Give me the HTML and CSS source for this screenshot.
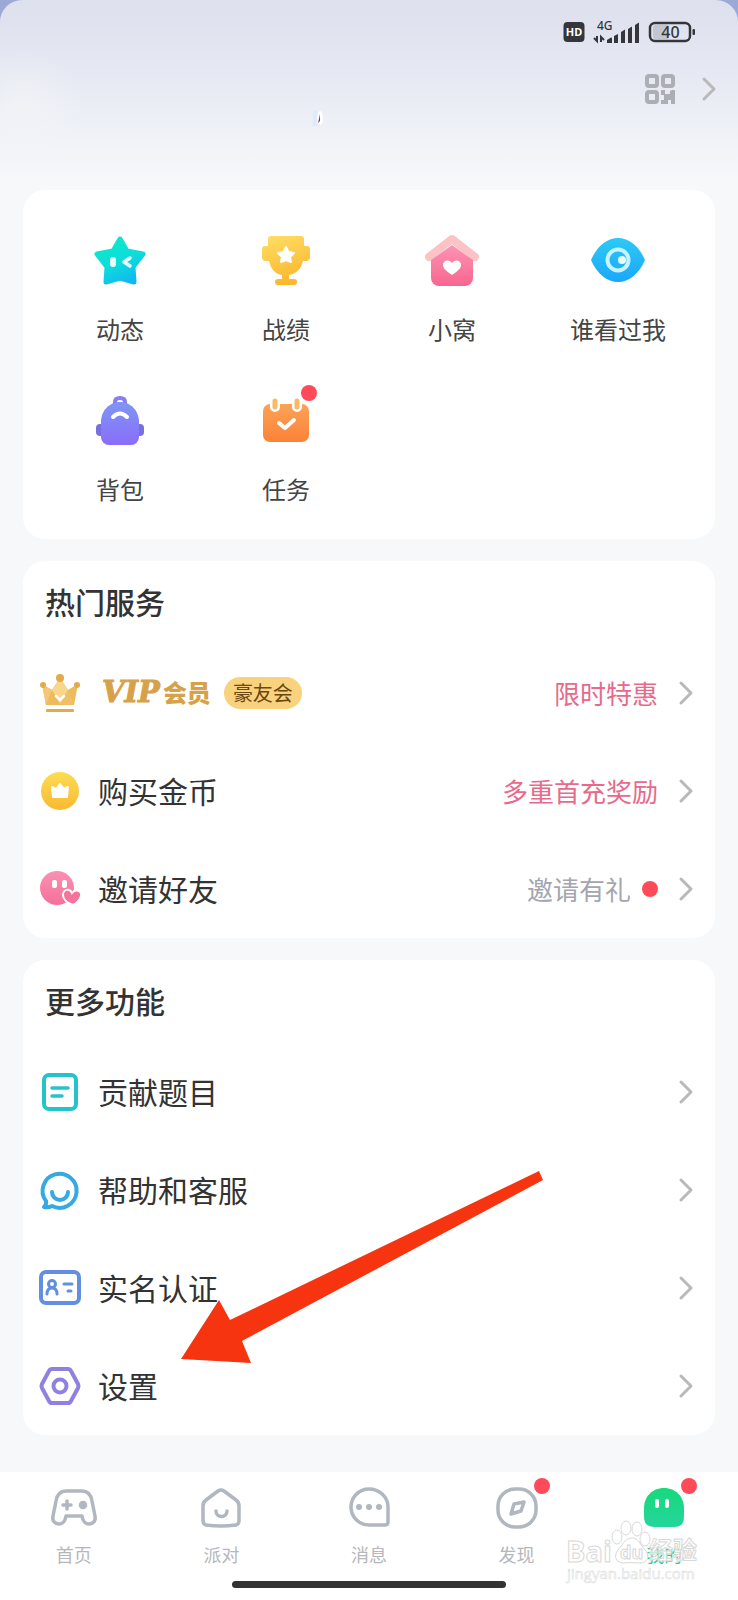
FILE: index.html
```html
<!DOCTYPE html>
<html lang="zh-CN">
<head>
  <meta charset="utf-8">
  <meta name="viewport" content="width=device-width, initial-scale=1">
  <title>我的</title>
  <link rel="stylesheet" href="styles.css">
</head>
<body>
  <div class="screen">
    <header class="top">
      <div class="status-bar">
        <svg class="status-hd" width="22" height="22" viewBox="0 0 22 22">
          <rect x="0.5" y="1" width="21" height="20" rx="4" fill="#35363b"/>
          <text x="11" y="15" text-anchor="middle" class="hd-text">HD</text>
        </svg>
        <svg class="status-signal" width="46" height="26" viewBox="0 0 46 26">
          <text x="3" y="11" class="net-text">4G</text>
          <g fill="#35363b">
            <path d="M13 24v-3l4-2.500q1 0 1 1v4.500z"/>
            <path d="M20 24v-7l4-2v9z"/>
            <path d="M27 24v-11l4-2.500v13.500z"/>
            <path d="M34 24v-14l4-2.500v16.500z"/>
            <path d="M41 24v-18l4-2.500v20.500z"/>
          </g>
          <path d="M0 19l3 3v-5M7 23v-5l3 3" fill="none" stroke="#35363b" stroke-width="2"/>
        </svg>
        <svg class="status-battery" width="46" height="22" viewBox="0 0 46 22">
          <rect x="4" y="4" width="16" height="14" rx="2" fill="#c3c6d0"/>
          <rect x="1" y="2" width="40" height="18" rx="5" fill="none" stroke="#35363b" stroke-width="2.500"/>
          <rect x="43.500" y="8" width="2.500" height="6" rx="1" fill="#35363b"/>
          <text x="21.500" y="17" text-anchor="middle" class="battery-text">40</text>
        </svg>
      </div>
      <div class="profile">
        <button class="icon-button" type="button" aria-label="二维码">
          <svg width="32" height="32" viewBox="0 0 32 32">
            <g fill="none" stroke="#adaeb3" stroke-width="4">
              <rect x="3" y="3" width="10" height="10" rx="2"/>
              <rect x="19" y="3" width="10" height="10" rx="2"/>
              <rect x="3" y="19" width="10" height="10" rx="2"/>
            </g>
            <path d="M17 17h4v4h5v-3l2-1h3v14h-4v-4h-3v4h-7v-4h3v-5h-3z" fill="#adaeb3"/>
          </svg>
        </button>
        <button class="icon-button" type="button" aria-label="个人主页">
          <svg class="chevron" width="14" height="24" viewBox="0 0 14 24"><path d="M2 2l10 10L2 22"/></svg>
        </button>
      </div>
      <svg class="spark" width="14" height="18" viewBox="0 0 14 18">
        <path d="M3 0h4v16H1z" fill="#e0eafb"/>
        <ellipse cx="9" cy="8" rx="3" ry="7" fill="#fff"/>
        <path d="M9 4v7l-2 2z" fill="#9a3a52"/>
      </svg>
    </header>

    <main class="content">
      <nav class="card shortcuts">
        <a class="shortcut" href="#">
          <svg width="56" height="56" viewBox="0 0 56 56">
            <defs>
              <linearGradient id="star" x1="0.300" y1="0" x2="0.800" y2="1">
                <stop offset="0" stop-color="#0ce9cc"/><stop offset="0.500" stop-color="#0edcdb"/><stop offset="1" stop-color="#10b6f2"/>
              </linearGradient>
            </defs>
            <path d="M28 6l7 12 16 3-10 13 1 15-14-4-14 4 1-15L5 21l16-3z" fill="url(#star)" stroke="url(#star)" stroke-width="5" stroke-linejoin="round"/>
            <rect x="18" y="24" width="6" height="10" rx="3" fill="#e9fffd"/>
            <path d="M38 25l-6 4 6 4" fill="none" stroke="#e9fffd" stroke-width="3.500" stroke-linecap="round" stroke-linejoin="round"/>
          </svg>
          <span>动态</span>
        </a>
        <a class="shortcut" href="#">
          <svg width="56" height="56" viewBox="0 0 56 56">
            <defs>
              <linearGradient id="cup" x1="0.300" y1="0" x2="0.600" y2="1">
                <stop offset="0" stop-color="#fedb60"/><stop offset="1" stop-color="#fbb52c"/>
              </linearGradient>
            </defs>
            <path d="M13 3h30a3 3 0 0 1 3 3v7h3a3 3 0 0 1 3 3v8a4 4 0 0 1-4 4h-3c-2 8-7 13-14 14v4h5a3 3 0 0 1 3 3v0a3 3 0 0 1-3 3H20a3 3 0 0 1-3-3v0a3 3 0 0 1 3-3h4v-4c-7-1-11-6-13-14H8a4 4 0 0 1-4-4v-8a3 3 0 0 1 3-3h3V6a3 3 0 0 1 3-3z" fill="url(#cup)"/>
            <path d="M28 14l2.500 5 5.500 1-4 4 1 5-5-2-5 2 1-5-4-4 5.500-1z" fill="#fff" stroke="#fff" stroke-width="2" stroke-linejoin="round"/>
          </svg>
          <span>战绩</span>
        </a>
        <a class="shortcut" href="#">
          <svg width="56" height="56" viewBox="0 0 56 56">
            <defs>
              <linearGradient id="house" x1="0" y1="0" x2="0" y2="1">
                <stop offset="0" stop-color="#fc93b4"/><stop offset="1" stop-color="#f9668f"/>
              </linearGradient>
            </defs>
            <path d="M5 24L28 6l23 18" fill="none" stroke="#fbc3c6" stroke-width="8" stroke-linejoin="round" stroke-linecap="round"/>
            <path d="M28 12l21 15v18a8 8 0 0 1-8 8H15a8 8 0 0 1-8-8V27z" fill="url(#house)"/>
            <path d="M28 42c-6-4-9-7-9-10 0-5 6-6 9-2 3-4 9-3 9 2 0 3-3 6-9 10z" fill="#fff"/>
          </svg>
          <span>小窝</span>
        </a>
        <a class="shortcut" href="#">
          <svg width="56" height="56" viewBox="0 0 56 56">
            <defs>
              <linearGradient id="eye" x1="0" y1="0" x2="0" y2="1">
                <stop offset="0" stop-color="#2ccaf5"/><stop offset="1" stop-color="#1aa7fa"/>
              </linearGradient>
            </defs>
            <path d="M1 27C7 13 17 5 28 5s21 8 27 22c-6 14-16 22-27 22S7 41 1 27z" fill="url(#eye)"/>
            <circle cx="28" cy="27" r="10.500" fill="none" stroke="#c7f3fd" stroke-width="4"/>
            <circle cx="32" cy="27" r="4" fill="#e6fbff"/>
          </svg>
          <span>谁看过我</span>
        </a>
        <a class="shortcut" href="#">
          <svg width="56" height="56" viewBox="0 0 56 56">
            <defs>
              <linearGradient id="bag" x1="0" y1="0" x2="0" y2="1">
                <stop offset="0" stop-color="#7f96f4"/><stop offset="1" stop-color="#8a6dfb"/>
              </linearGradient>
            </defs>
            <path d="M23 13v-4q0-4 5-4t5 4v4" fill="none" stroke="#8a7df0" stroke-width="4"/>
            <rect x="4" y="31" width="48" height="12" rx="4" fill="#776fe0"/>
            <path d="M28 9c11 0 19 9 19 20v15a8 8 0 0 1-8 8H17a8 8 0 0 1-8-8V29C9 18 17 9 28 9z" fill="url(#bag)"/>
            <path d="M21 24q7-7 14 0" fill="none" stroke="#fff" stroke-width="4" stroke-linecap="round"/>
          </svg>
          <span>背包</span>
        </a>
        <a class="shortcut" href="#">
          <span class="badge-wrap">
            <svg width="56" height="56" viewBox="0 0 56 56">
              <defs>
                <linearGradient id="task" x1="0" y1="0" x2="0" y2="1">
                  <stop offset="0" stop-color="#fba358"/><stop offset="1" stop-color="#fb8236"/>
                </linearGradient>
              </defs>
              <rect x="5" y="11" width="46" height="38" rx="7" fill="url(#task)"/>
              <g stroke-linecap="round">
                <path d="M17 9v5M39 9v5" stroke="#fff" stroke-width="10"/>
                <path d="M17 8v6M39 8v6" stroke="#fbb965" stroke-width="5"/>
              </g>
              <path d="M21 30l6 5 9-8" fill="none" stroke="#fff" stroke-width="4" stroke-linecap="round" stroke-linejoin="round"/>
            </svg>
            <i class="dot badge"></i>
          </span>
          <span>任务</span>
        </a>
      </nav>

      <section class="card">
        <h2 class="card-title">热门服务</h2>
        <a class="row" href="#">
          <svg width="42" height="42" viewBox="0 0 42 42">
            <path d="M3 12l10 6 8-12 8 12 10-6-4 21H7z" fill="#edba5c"/>
            <path d="M21 7l-8 11 8 14 8-14z" fill="#f8d68b"/>
            <path d="M7 33l6-15-10-6z" fill="#f4c872"/>
            <path d="M35 33L21 32l8-14z" fill="#f0c069"/>
            <g fill="#e3aa4c">
              <circle cx="21" cy="6" r="4"/><circle cx="4" cy="13" r="3"/><circle cx="38" cy="13" r="3"/>
              <rect x="7" y="37" width="28" height="3" rx="1"/>
            </g>
            <path d="M17 24l4 4 4-4" fill="none" stroke="#fff" stroke-width="2.500" stroke-linecap="round"/>
          </svg>
          <span class="row-label vip"><b class="vip-latin">VIP</b><b class="vip-cjk">会员</b></span>
          <span class="tag">豪友会</span>
          <span class="row-note hot">限时特惠</span>
          <svg class="chevron" width="14" height="24" viewBox="0 0 14 24"><path d="M2 2l10 10L2 22"/></svg>
        </a>
        <a class="row" href="#">
          <svg width="42" height="42" viewBox="0 0 42 42">
            <defs>
              <linearGradient id="coin" x1="0" y1="0" x2="0" y2="1">
                <stop offset="0" stop-color="#fcdc52"/><stop offset="1" stop-color="#f9b933"/>
              </linearGradient>
            </defs>
            <circle cx="21" cy="21" r="19" fill="url(#coin)"/>
            <path d="M13 17l4 2 4-5 4 5 4-2-1 10H14z" fill="#fff" stroke="#fff" stroke-width="2" stroke-linejoin="round"/>
          </svg>
          <span class="row-label">购买金币</span>
          <span class="row-note hot">多重首充奖励</span>
          <svg class="chevron" width="14" height="24" viewBox="0 0 14 24"><path d="M2 2l10 10L2 22"/></svg>
        </a>
        <a class="row" href="#">
          <svg width="42" height="42" viewBox="0 0 42 42">
            <defs>
              <linearGradient id="pal" x1="0" y1="0" x2="0" y2="1">
                <stop offset="0" stop-color="#fb90b3"/><stop offset="1" stop-color="#f4709b"/>
              </linearGradient>
            </defs>
            <circle cx="18" cy="20" r="17" fill="url(#pal)"/>
            <rect x="13" y="12" width="5" height="8" rx="2" fill="#fff"/>
            <rect x="23" y="12" width="5" height="8" rx="2" fill="#fff"/>
            <path d="M34 37c-6-2-10-6-10-10 0-6 7-7 9-2 4-5 10-2 9 3-1 4-4 7-8 9z" fill="#f6749b" stroke="#fff" stroke-width="2"/>
          </svg>
          <span class="row-label">邀请好友</span>
          <span class="row-note">邀请有礼</span>
          <i class="dot row-dot"></i>
          <svg class="chevron" width="14" height="24" viewBox="0 0 14 24"><path d="M2 2l10 10L2 22"/></svg>
        </a>
      </section>

      <section class="card">
        <h2 class="card-title">更多功能</h2>
        <a class="row" href="#">
          <svg width="42" height="42" viewBox="0 0 42 42" fill="none" stroke="#25c3cb" stroke-width="4" stroke-linecap="round">
            <rect x="5" y="4" width="32" height="34" rx="5"/>
            <path d="M13 17h16M13 25h10" stroke-width="3.500"/>
          </svg>
          <span class="row-label">贡献题目</span>
          <svg class="chevron" width="14" height="24" viewBox="0 0 14 24"><path d="M2 2l10 10L2 22"/></svg>
        </a>
        <a class="row" href="#">
          <svg width="42" height="42" viewBox="0 0 42 42" fill="none" stroke="#35a9e4" stroke-width="4" stroke-linecap="round" stroke-linejoin="round">
            <path d="M7 32a17 17 0 1 1 6 5q-4 2-8 1 3-3 2-6z"/>
            <path d="M13 23a8 8 0 0 0 16 0"/>
          </svg>
          <span class="row-label">帮助和客服</span>
          <svg class="chevron" width="14" height="24" viewBox="0 0 14 24"><path d="M2 2l10 10L2 22"/></svg>
        </a>
        <a class="row" href="#">
          <svg width="42" height="42" viewBox="0 0 42 42" fill="none" stroke="#638fe2" stroke-width="4" stroke-linecap="round">
            <rect x="2" y="5" width="38" height="31" rx="5"/>
            <circle cx="13" cy="17" r="3.500" stroke-width="3"/>
            <path d="M8 27q0-6 5-6t5 6M25 17h8M29 24h3" stroke-width="3"/>
          </svg>
          <span class="row-label">实名认证</span>
          <svg class="chevron" width="14" height="24" viewBox="0 0 14 24"><path d="M2 2l10 10L2 22"/></svg>
        </a>
        <a class="row" href="#">
          <svg width="42" height="42" viewBox="0 0 42 42" fill="none" stroke="#9080e0" stroke-width="4" stroke-linejoin="round">
            <path d="M13 4h16q2 0 3 2l7 13q1 2 0 4l-7 13q-1 2-3 2H13q-2 0-3-2L3 23q-1-2 0-4l7-13q1-2 3-2z"/>
            <circle cx="21" cy="21" r="6.500"/>
          </svg>
          <span class="row-label">设置</span>
          <svg class="chevron" width="14" height="24" viewBox="0 0 14 24"><path d="M2 2l10 10L2 22"/></svg>
        </a>
        <svg class="pointer" width="364" height="194" viewBox="0 0 364 194">
          <path d="M0 189L38 130l11 20L358 1l4 9L61 171l9 22z" fill="#f73410"/>
        </svg>
      </section>
    </main>

    <nav class="tab-bar">
      <a class="tab" href="#">
        <svg width="48" height="44" viewBox="0 0 48 44" fill="none" stroke="#b0b7c1" stroke-width="3.500" stroke-linejoin="round" stroke-linecap="round">
          <path d="M16 4h16c6 0 9 4 10 10l3 15c1 5-2 8-6 8-4 0-6-2-7-8H16c-1 6-3 8-7 8-4 0-7-3-6-8l3-15C7 8 10 4 16 4z"/>
          <path d="M13 18h8M17 14v8"/>
          <circle cx="33" cy="18" r="2.500" fill="#b0b7c1"/>
        </svg>
        <span>首页</span>
      </a>
      <a class="tab" href="#">
        <svg width="48" height="44" viewBox="0 0 48 44" fill="none" stroke="#b0b7c1" stroke-width="3.500" stroke-linejoin="round" stroke-linecap="round">
          <path d="M21 4q3-2 6 0l12 9q3 2 3 6v15q0 3-3 4-15 2-30 0-3-1-3-4V19q0-4 3-6z"/>
          <path d="M19 24a5.500 5.500 0 0 0 11 0"/>
        </svg>
        <span>派对</span>
      </a>
      <a class="tab" href="#">
        <svg width="48" height="44" viewBox="0 0 48 44" fill="none" stroke="#b0b7c1" stroke-width="3.500">
          <path d="M24 2a19 18 0 0 1 19 18v15q0 3-3 3H24a18 18 0 1 1 0-36z"/>
          <g fill="#b0b7c1" stroke="none"><circle cx="14" cy="20" r="3"/><circle cx="24" cy="20" r="3"/><circle cx="34" cy="20" r="3"/></g>
        </svg>
        <span>消息</span>
      </a>
      <a class="tab" href="#">
        <span class="badge-wrap">
          <svg width="48" height="44" viewBox="0 0 48 44" fill="none" stroke="#b0b7c1" stroke-width="3.500" stroke-linejoin="round">
            <rect x="5" y="2" width="38" height="38" rx="17"/>
            <path d="M21 17l10-2-3 9-10 3z"/>
          </svg>
          <i class="dot badge"></i>
        </span>
        <span>发现</span>
      </a>
      <a class="tab active" href="#">
        <span class="badge-wrap">
          <svg width="48" height="44" viewBox="0 0 48 44">
            <defs>
              <linearGradient id="me" x1="0" y1="0" x2="0" y2="1">
                <stop offset="0" stop-color="#17da7b"/><stop offset="1" stop-color="#25d49b"/>
              </linearGradient>
            </defs>
            <path d="M24 1c12 0 20 9 20 20v9q0 10-10 10H15Q4 40 4 30v-9C4 10 12 1 24 1z" fill="url(#me)"/>
            <rect x="15" y="12" width="4" height="9" rx="2" fill="#fff"/>
            <rect x="25" y="12" width="4" height="9" rx="2" fill="#fff"/>
          </svg>
          <i class="dot badge"></i>
        </span>
        <span>我的</span>
      </a>
    </nav>
    <div class="home-indicator"></div>

    <div class="watermark">
      <svg width="134" height="64" viewBox="0 0 134 64">
        <g fill="#fff" fill-opacity="0.700" stroke="#d8d8d8">
          <ellipse cx="51" cy="18" rx="5" ry="7"/>
          <ellipse cx="60" cy="9" rx="5" ry="7"/>
          <ellipse cx="71" cy="10" rx="5" ry="7"/>
          <ellipse cx="79" cy="20" rx="5" ry="7"/>
          <path d="M66 19c7 0 8 7 13 12 6 7 2 13-5 13-4 0-12-1-16 0-8 0-11-7-6-13 5-5 7-12 14-12z"/>
          <text x="0" y="43" class="wm-name">Bai</text>
          <text x="54" y="40" class="wm-du">du</text>
          <text x="83" y="40" class="wm-cjk">经验</text>
          <text x="1" y="60" class="wm-url">jingyan.baidu.com</text>
        </g>
      </svg>
    </div>
  </div>
</body>
</html>
```

FILE: styles.css
```css
* {
  box-sizing: border-box;
}

body {
  margin: 0;
  background-color: #9ba9d6;
  font-family: "Noto Sans CJK SC", sans-serif;
  color: #333;
}

a {
  color: inherit;
  text-decoration: none;
}

svg {
  display: block;
  flex: none;
  overflow: visible;
}

.screen {
  position: relative;
  display: flex;
  flex-direction: column;
  min-height: 100vh;
  background-color: #f6f8fa;
  background-image: radial-gradient(circle at 24px 108px, rgba(246, 246, 248, 0.6), rgba(246, 246, 248, 0) 60px), linear-gradient(#dde0ed, #e8ebf4 90px, #f6f8fa 180px);
  background-repeat: no-repeat;
  border-radius: 22px 22px 0 0;
}

/* header */
.top {
  position: relative;
  height: 190px;
  padding: 20px 22px 0;
}

.status-bar {
  display: flex;
  align-items: center;
  justify-content: flex-end;
  gap: 9px;
  height: 24px;
  padding-right: 21px;
  font-family: "Noto Sans", sans-serif;
}

.hd-text {
  font-size: 11px;
  font-weight: 700;
  fill: #fff;
}

.net-text {
  font-size: 12px;
  font-weight: 500;
  fill: #35363b;
}

.battery-text {
  font-size: 16px;
  font-weight: 500;
  fill: #35363b;
}

.profile {
  display: flex;
  align-items: center;
  justify-content: flex-end;
  gap: 26px;
  margin-top: 29px;
}

.spark {
  position: absolute;
  left: 43%;
  top: 110px;
  margin-left: -6px;
}

.icon-button {
  padding: 0;
  border: none;
  background: none;
  cursor: pointer;
}

.chevron {
  fill: none;
  stroke: #b9b9bb;
  stroke-width: 3;
  stroke-linecap: round;
  stroke-linejoin: round;
}

/* cards */
.content {
  display: flex;
  flex-direction: column;
  gap: 22px;
  padding: 0 23px 36px;
}

.card {
  position: relative;
  background-color: #fff;
  border-radius: 22px;
}

.card-title {
  margin: 0;
  padding: 20px 22px 23px;
  font-size: 30px;
  line-height: 40px;
  font-weight: 500;
}

.shortcuts {
  display: grid;
  grid-template-columns: repeat(4, 1fr);
  row-gap: 46px;
  padding: 43px 14px 32px;
}

.shortcut {
  display: flex;
  flex-direction: column;
  align-items: center;
  gap: 22px;
  font-size: 24px;
  line-height: 36px;
  color: #444;
}

.row {
  display: flex;
  align-items: center;
  height: 98px;
  padding: 0 22px 0 16px;
}

.row-label {
  margin-left: 17px;
  padding-bottom: 2px;
  font-size: 30px;
  line-height: 40px;
}

.row .chevron {
  margin-left: auto;
}

.row-note {
  margin-left: auto;
  font-size: 26px;
  line-height: 40px;
  color: #a3a6af;
}

.row-note.hot {
  color: #e76a8b;
}

.row .row-note ~ .chevron {
  margin-left: 21px;
}

.dot {
  width: 16px;
  height: 16px;
  border-radius: 50%;
  background-color: #ff4b59;
}

.row-dot {
  margin-left: 11px;
}

.badge-wrap {
  position: relative;
}

.badge {
  position: absolute;
  top: -8px;
  right: -3px;
}

/* vip */
.vip {
  display: flex;
  align-items: center;
  gap: 3px;
  padding-left: 4px;
  color: #d6a148;
}

.vip-latin {
  font-family: "DejaVu Serif", serif;
  font-size: 29px;
  font-weight: 700;
  font-style: italic;
  -webkit-text-stroke: 1px #d6a148;
}

.vip-cjk {
  font-size: 24px;
  font-weight: 900;
}

.tag {
  margin-left: 13px;
  padding: 0 9px;
  border-radius: 16px;
  background-color: #f9d27d;
  font-size: 20px;
  line-height: 32px;
  color: #6b4712;
}

.pointer {
  position: absolute;
  left: 158px;
  top: 210px;
  pointer-events: none;
}

/* tab bar */
.tab-bar {
  display: grid;
  grid-template-columns: repeat(5, 1fr);
  margin-top: auto;
  padding: 15px 0 13px;
  background-color: #fff;
}

.tab {
  display: flex;
  flex-direction: column;
  align-items: center;
  gap: 9px;
  font-size: 18px;
  line-height: 28px;
  color: #b5b7bc;
}

.tab.active {
  color: #2ccb93;
}

.tab .badge {
  top: -9px;
  right: -9px;
}

.home-indicator {
  height: 19px;
  background: #fff;
}

.home-indicator::after {
  content: "";
  display: block;
  width: 37%;
  height: 7px;
  margin: 0 auto;
  border-radius: 4px;
  background-color: #333;
}

.watermark {
  position: absolute;
  right: 38px;
  bottom: 17px;
  pointer-events: none;
}

.wm-name {
  font: 700 29px "Open Sans", sans-serif;
}

.wm-du {
  font: 700 18px "Open Sans", sans-serif;
}

.wm-cjk {
  font: 700 24px "Noto Sans CJK SC", sans-serif;
}

.wm-url {
  font: 400 15px "Open Sans", sans-serif;
  stroke-width: 0.5;
}
```
